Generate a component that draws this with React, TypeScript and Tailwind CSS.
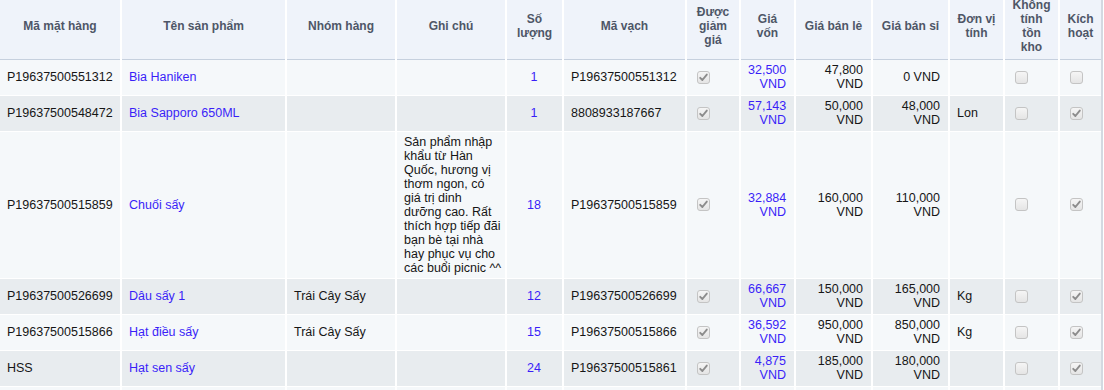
import React from "react";

type Row = {
  code: string;
  name: string;
  group?: string;
  note?: string[];
  qty: string;
  barcode: string;
  discount: boolean;
  cost: string[];
  retail: string[];
  wholesale: string[];
  unit?: string;
  noStock: boolean;
  active: boolean;
  tall?: boolean;
};

const rows: Row[] = [
  {
    code: "P19637500551312",
    name: "Bia Haniken",
    qty: "1",
    barcode: "P19637500551312",
    discount: true,
    cost: ["32,500", "VND"],
    retail: ["47,800", "VND"],
    wholesale: ["0 VND"],
    noStock: false,
    active: false,
  },
  {
    code: "P19637500548472",
    name: "Bia Sapporo 650ML",
    qty: "1",
    barcode: "8808933187667",
    discount: true,
    cost: ["57,143", "VND"],
    retail: ["50,000", "VND"],
    wholesale: ["48,000", "VND"],
    unit: "Lon",
    noStock: false,
    active: true,
  },
  {
    code: "P19637500515859",
    name: "Chuối sấy",
    note: [
      "Sản phẩm nhập",
      "khẩu từ Hàn",
      "Quốc, hương vị",
      "thơm ngon, có",
      "giá trị dinh",
      "dưỡng cao. Rất",
      "thích hợp tiếp đãi",
      "bạn bè tại nhà",
      "hay phục vụ cho",
      "các buổi picnic ^^",
    ],
    qty: "18",
    barcode: "P19637500515859",
    discount: true,
    cost: ["32,884", "VND"],
    retail: ["160,000", "VND"],
    wholesale: ["110,000", "VND"],
    noStock: false,
    active: true,
    tall: true,
  },
  {
    code: "P19637500526699",
    name: "Dâu sấy 1",
    group: "Trái Cây Sấy",
    qty: "12",
    barcode: "P19637500526699",
    discount: true,
    cost: ["66,667", "VND"],
    retail: ["150,000", "VND"],
    wholesale: ["165,000", "VND"],
    unit: "Kg",
    noStock: false,
    active: true,
  },
  {
    code: "P19637500515866",
    name: "Hạt điều sấy",
    group: "Trái Cây Sấy",
    qty: "15",
    barcode: "P19637500515866",
    discount: true,
    cost: ["36,592", "VND"],
    retail: ["950,000", "VND"],
    wholesale: ["850,000", "VND"],
    unit: "Kg",
    noStock: false,
    active: true,
  },
  {
    code: "HSS",
    name: "Hạt sen sấy",
    qty: "24",
    barcode: "P19637500515861",
    discount: true,
    cost: ["4,875", "VND"],
    retail: ["185,000", "VND"],
    wholesale: ["180,000", "VND"],
    noStock: false,
    active: true,
  },
];

function Check({ checked }: { checked: boolean }) {
  return (
    <svg width="13" height="13" viewBox="0 0 13 13" className="ml-[3px] block">
      <defs>
        <linearGradient id="cbg" x1="0" y1="0" x2="0" y2="1">
          <stop offset="0" stopColor="#f6f6f6" />
          <stop offset="1" stopColor="#e4e4e4" />
        </linearGradient>
      </defs>
      <rect x="0.5" y="0.5" width="12" height="12" rx="2.5" fill="url(#cbg)" stroke="#c4c4c4" />
      {checked && (
        <path d="M3.2 6.8 L5.4 9 L9.8 3.6" fill="none" stroke="#8c8c8c" strokeWidth="1.9" strokeLinecap="round" strokeLinejoin="round" />
      )}
    </svg>
  );
}

const headers: string[][] = [
  ["Mã mặt hàng"],
  ["Tên sản phẩm"],
  ["Nhóm hàng"],
  ["Ghi chú"],
  ["Số", "lượng"],
  ["Mã vạch"],
  ["Được", "giảm", "giá"],
  ["Giá", "vốn"],
  ["Giá bán lẻ"],
  ["Giá bán sỉ"],
  ["Đơn vị", "tính"],
  ["Không", "tính", "tồn", "kho"],
  ["Kích", "hoạt"],
];

function Lines({ lines }: { lines: string[] }) {
  return (
    <>
      {lines.map((l, i) => (
        <div key={i} className="whitespace-nowrap">
          {l}
        </div>
      ))}
    </>
  );
}

export default function App() {
  const td = "border-r-2 border-b border-white pl-[7px] pr-[8px] py-0 align-middle";
  return (
    <div className="w-[1104px] h-[390px] overflow-hidden bg-white font-['Liberation_Sans',Arial,sans-serif]">
      <table className="-mt-[7px] table-fixed border-collapse w-[1102px] text-[12.5px] leading-[14px] text-[#161616]">
        <colgroup>
          <col className="w-[121px]" />
          <col className="w-[165px]" />
          <col className="w-[110px]" />
          <col className="w-[110px]" />
          <col className="w-[57px]" />
          <col className="w-[123px]" />
          <col className="w-[54px]" />
          <col className="w-[55px]" />
          <col className="w-[77px]" />
          <col className="w-[77px]" />
          <col className="w-[55px]" />
          <col className="w-[55px]" />
          <col className="w-[43px]" />
        </colgroup>
        <thead>
          <tr className="h-[66px] bg-[#eff3fa]">
            {headers.map((h, i) => (
              <th
                key={i}
                className={`border-r-2 border-white border-b border-b-[#c6d0de] px-[4px] align-middle text-center text-[12px] leading-[14px] font-bold text-[#4e5667] ${i === 12 ? "border-r-[#d3d9e1]" : ""}`}
              >
                {h.map((l, j) => (
                  <div key={j}>{l}</div>
                ))}
              </th>
            ))}
          </tr>
        </thead>
        <tbody>
          {rows.map((r, i) => {
            const bg = i % 2 === 0 ? "bg-[#f5f8fa]" : "bg-[#e8ecef]";
            return (
              <tr key={i} className={`${bg} ${r.tall ? "h-[147px]" : "h-[36px]"}`}>
                <td className={td}>{r.code}</td>
                <td className={`${td} text-[#3a1ff8]`}>{r.name}</td>
                <td className={td}>{r.group ?? ""}</td>
                <td className={`${td} py-[3px]`}>{r.note ? <Lines lines={r.note} /> : null}</td>
                <td className={`${td} text-center text-[#3a1ff8]`}>{r.qty}</td>
                <td className={td}>{r.barcode}</td>
                <td className={td}>
                  <Check checked={r.discount} />
                </td>
                <td className={`${td} text-right text-[#3a1ff8]`}>
                  <Lines lines={r.cost} />
                </td>
                <td className={`${td} text-right`}>
                  <Lines lines={r.retail} />
                </td>
                <td className={`${td} text-right`}>
                  <Lines lines={r.wholesale} />
                </td>
                <td className={td}>{r.unit ?? ""}</td>
                <td className={td}>
                  <Check checked={r.noStock} />
                </td>
                <td className={`${td} border-r-[#d3d9e1]`}>
                  <Check checked={r.active} />
                </td>
              </tr>
            );
          })}
          <tr className="h-[36px] bg-[#f5f8fa]">
            {headers.map((_, i) => (
              <td key={i} className={`${td} ${i === 12 ? "border-r-[#d3d9e1]" : ""}`}></td>
            ))}
          </tr>
        </tbody>
      </table>
    </div>
  );
}
